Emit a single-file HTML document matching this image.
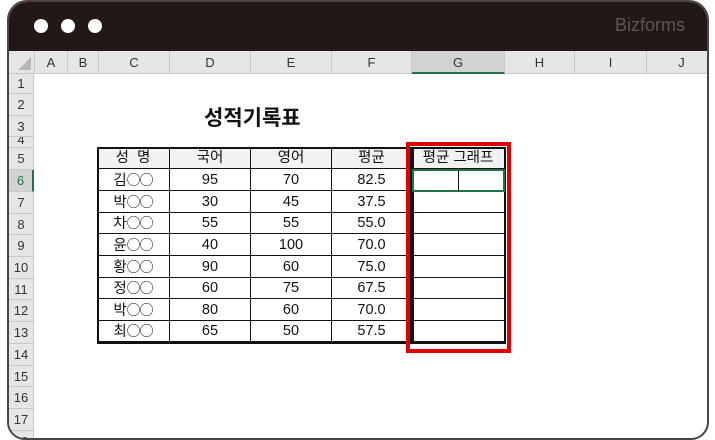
<!DOCTYPE html>
<html><head><meta charset="utf-8"><style>
*{margin:0;padding:0;box-sizing:border-box}
body{width:715px;height:440px;background:#fff;position:relative;overflow:hidden;font-family:"Liberation Sans","Noto Sans CJK KR",sans-serif}
.win{position:absolute;left:7px;top:0;width:702px;height:440px;border:2px solid #4a4543;border-radius:20px 20px 18px 18px;overflow:hidden;background:#fff}
.bar{position:absolute;left:0;top:0;right:0;height:49px;background:#231815}
.dot{position:absolute;top:17px;width:14px;height:14px;border-radius:50%;background:#fff}
.brand{position:absolute;right:22px;top:13px;color:#5e5654;font-size:18px}
.ch{position:absolute;top:49px;height:23px;background:#e6e6e6;border-right:1px solid #c8c8c8;border-bottom:1px solid #c8c8c8;font-size:13px;color:#333;text-align:center;line-height:23px}
.rh{position:absolute;left:0;width:25px;background:#e6e6e6;border-bottom:1px solid #c8c8c8;border-right:1px solid #c8c8c8;font-size:13px;color:#333;text-align:center;overflow:hidden}
.c{position:absolute;font-size:14.5px;color:#111;text-align:center;border-right:1px solid #111;border-bottom:1px solid #111}
.o{font-family:"Noto Sans CJK KR",sans-serif;font-size:14px;letter-spacing:-1px}
.z{z-index:5}
</style></head><body>
<div class="win">
<div class="bar"><div class="dot" style="left:25px"></div><div class="dot" style="left:52px"></div><div class="dot" style="left:79px"></div><div class="brand">Bizforms</div></div>
<div class="ch" style="left:0;width:26px"><div style="position:absolute;right:3px;bottom:3px;width:0;height:0;border-left:13px solid transparent;border-bottom:13px solid #b8b8b8"></div></div>
<div class="ch" style="left:26px;width:33px">A</div>
<div class="ch" style="left:59px;width:31px">B</div>
<div class="ch" style="left:90px;width:71px">C</div>
<div class="ch" style="left:161px;width:81px">D</div>
<div class="ch" style="left:242px;width:81px">E</div>
<div class="ch" style="left:323px;width:80px">F</div>
<div class="ch" style="left:403px;width:93px;background:#d2d2d2;border-bottom:2px solid #217346">G</div>
<div class="ch" style="left:496px;width:70px">H</div>
<div class="ch" style="left:566px;width:72px">I</div>
<div class="ch" style="left:638px;width:70px">J</div>

<div class="rh" style="top:72px;height:20px;line-height:20px">1</div>
<div class="rh" style="top:92px;height:22px;line-height:22px">2</div>
<div class="rh" style="top:114px;height:21px;line-height:21px">3</div>
<div class="rh" style="top:135px;height:11px;line-height:6px">4</div>
<div class="rh" style="top:146px;height:22px;line-height:22px">5</div>
<div class="rh" style="top:168px;height:22px;line-height:22px;background:#d2d2d2;color:#217346;border-right:2px solid #217346">6</div>
<div class="rh" style="top:190px;height:22px;line-height:22px">7</div>
<div class="rh" style="top:212px;height:21px;line-height:21px">8</div>
<div class="rh" style="top:233px;height:22px;line-height:22px">9</div>
<div class="rh" style="top:255px;height:22px;line-height:22px">10</div>
<div class="rh" style="top:277px;height:21px;line-height:21px">11</div>
<div class="rh" style="top:298px;height:22px;line-height:22px">12</div>
<div class="rh" style="top:320px;height:22px;line-height:22px">13</div>
<div class="rh" style="top:342px;height:22px;line-height:22px">14</div>
<div class="rh" style="top:364px;height:21px;line-height:21px">15</div>
<div class="rh" style="top:385px;height:22px;line-height:22px">16</div>
<div class="rh" style="top:407px;height:22px;line-height:22px">17</div>
<div class="rh" style="top:429px;height:22px;line-height:22px">18</div>

<div style="position:absolute;left:195px;top:100px;font-size:21px;font-weight:bold;color:#111">성적기록표</div>

<div class="z" style="position:absolute;left:88px;top:145px;width:317px;height:197px;border:2px solid #111"></div>
<div class="z" style="position:absolute;left:401px;top:145px;width:96px;height:197px;border:2px solid #111"></div>
<div class="z" style="position:absolute;left:397px;top:140px;width:105px;height:211px;border:4px solid #e00000"></div>
</div>
<script>
var tops=[146,168,190,212,233,255,277,298,320,341];
var cols=[[88,161],[161,242],[242,323],[323,403]];
var O='<span class="o">○○</span>';
var data=[["성&nbsp; 명","국어","영어","평균"],["김"+O,"95","70","82.5"],["박"+O,"30","45","37.5"],["차"+O,"55","55","55.0"],["윤"+O,"40","100","70.0"],["황"+O,"90","60","75.0"],["정"+O,"60","75","67.5"],["박"+O,"80","60","70.0"],["최"+O,"65","50","57.5"]];
var w=document.querySelector('.win'),h='';
for(var r=0;r<9;r++){var t=tops[r]-1,hh=tops[r+1]-tops[r];
for(var c=0;c<4;c++){h+='<div class="c" style="left:'+cols[c][0]+'px;top:'+t+'px;width:'+(cols[c][1]-cols[c][0])+'px;height:'+hh+'px;line-height:'+hh+'px;'+(r==0?'background:#f2f2f2;':'')+'">'+data[r][c]+'</div>';}
var g=r==0?'평균 그래프':'';
h+='<div class="c" style="left:403px;top:'+t+'px;width:93px;height:'+hh+'px;line-height:'+hh+'px;'+(r==0?'background:#f2f2f2;':'')+'">'+g+'</div>';}
h+='<div style="position:absolute;z-index:6;left:403px;top:167px;width:93px;height:23px;border:2px solid #217346"></div>';
h+='<div style="position:absolute;z-index:6;left:449px;top:168px;width:1px;height:21px;background:#111"></div>';
w.insertAdjacentHTML('beforeend',h);
</script>
</body></html>
